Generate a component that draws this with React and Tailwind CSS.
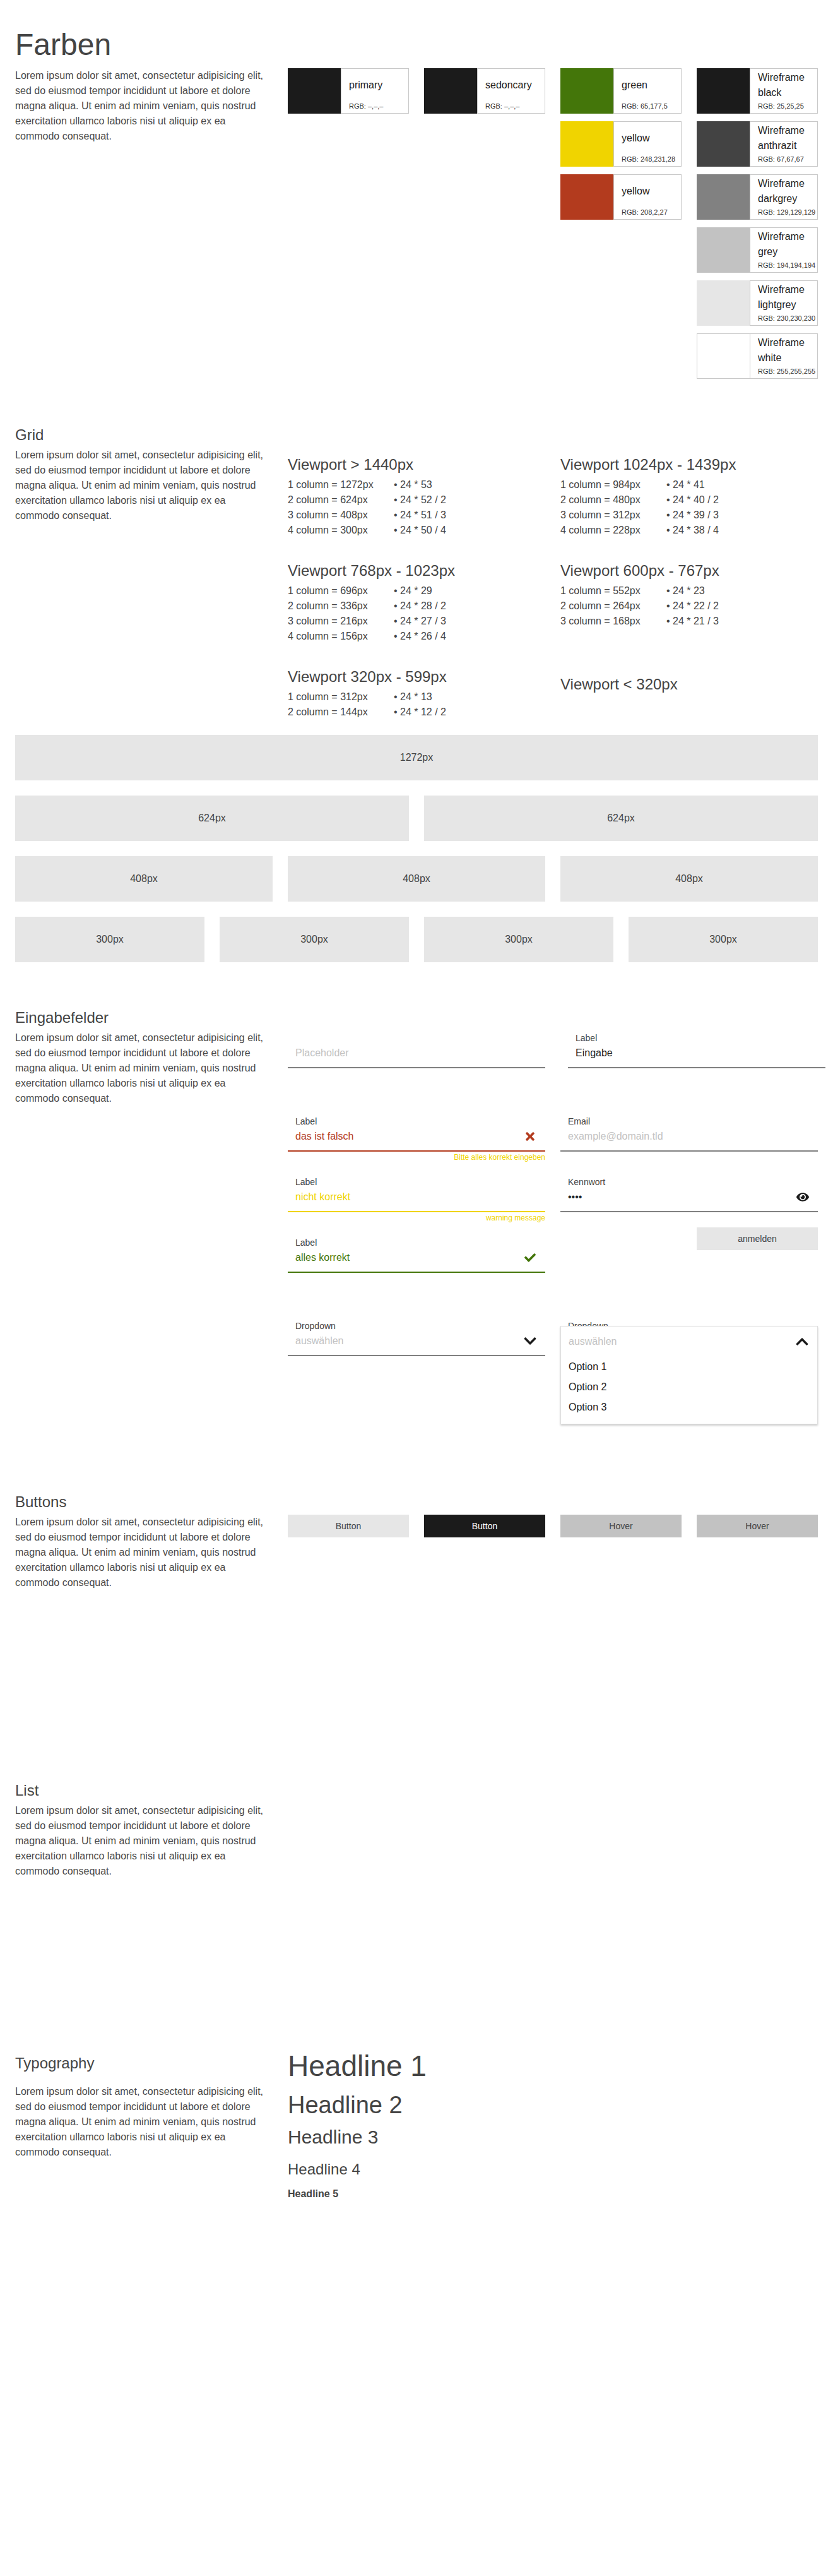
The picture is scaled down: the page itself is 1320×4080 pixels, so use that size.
import React from "react"
import { FaTimes, FaCheck, FaEye, FaChevronDown, FaChevronUp } from "react-icons/fa"

const LOREM =
  "Lorem ipsum dolor sit amet, consectetur adipisicing elit, sed do eiusmod tempor incididunt ut labore et dolore magna aliqua. Ut enim ad minim veniam, quis nostrud exercitation ullamco laboris nisi ut aliquip ex ea commodo consequat."

const Lorem = ({ className = "" }) => (
  <p className={`text-[16px] leading-6 text-[#4a4a4a] ${className}`}>{LOREM}</p>
)

const Heading = ({ children, className = "" }) => (
  <h2 className={`text-[24px] leading-8 text-[#444] ${className}`}>{children}</h2>
)

const Swatch = ({ color, name, rgb, white }) => (
  <div className="flex h-[72px]">
    <div className={`w-[84px] shrink-0 ${color} ${white ? "border border-r-0 border-[#c8c8c8]" : ""}`} />
    <div className="flex flex-1 flex-col border border-[#c8c8c8] pl-3">
      <div className="flex flex-1 items-center text-[16px] leading-6 text-[#222]">
        <span className="block">{name}</span>
      </div>
      <div className="pb-[3px] text-[11px] leading-4 text-[#333]">RGB: {rgb}</div>
    </div>
  </div>
)

const Viewport = ({ title, rows, className = "" }) => (
  <div className={className}>
    <h3 className="text-[24px] leading-8 text-[#444]">{title}</h3>
    <div className="mt-1">
      {rows.map((r) => (
        <div key={r[0]} className="flex text-[16px] leading-6 text-[#444]">
          <span className="w-[168px]">{r[0]}</span>
          <span>• {r[1]}</span>
        </div>
      ))}
    </div>
  </div>
)

const Box = ({ label }) => (
  <div className="flex h-[72px] items-center justify-center bg-[#e6e6e6] text-[16px] text-[#444]">{label}</div>
)

// underline input field: label 16 + gap 4 + value 24 + pb 10 + border 2 = 56px
const Field = ({ label, value, valueClass = "text-[#222]", line = "border-[#808080]", icon, className = "" }) => (
  <div className={`border-b-2 pb-[10px] pl-3 ${line} ${className}`}>
    <div className="h-4 text-[14px] leading-4 text-[#444]">{label}</div>
    <div className="mt-1 flex h-6 items-center">
      <span className={`flex-1 text-[16px] leading-6 ${valueClass}`}>{value}</span>
      {icon && <span className="mr-3 flex w-6 items-center justify-center">{icon}</span>}
    </div>
  </div>
)

const Button = ({ children, className }) => (
  <div className={`flex h-9 items-center justify-center text-[14px] ${className}`}>{children}</div>
)

export default function App() {
  return (
    <div className="min-h-[4080px] w-[1320px] bg-white px-6 pt-[47px] font-['Liberation_Sans',Arial,sans-serif]">
      {/* Farben */}
      <h1 className="text-[48px] leading-[48px] text-[#444]">Farben</h1>
      <div className="mt-[13px] grid grid-cols-[408px_840px] gap-x-6">
        <Lorem />
        <div className="grid grid-cols-4 items-start gap-x-6">
          <div className="flex flex-col gap-3">
            <Swatch color="bg-[#1b1b1b]" name="primary" rgb="–,–,–" />
          </div>
          <div className="flex flex-col gap-3">
            <Swatch color="bg-[#1b1b1b]" name="sedoncary" rgb="–,–,–" />
          </div>
          <div className="flex flex-col gap-3">
            <Swatch color="bg-[#44760a]" name="green" rgb="65,177,5" />
            <Swatch color="bg-[#f0d400]" name="yellow" rgb="248,231,28" />
            <Swatch color="bg-[#b33b1e]" name="yellow" rgb="208,2,27" />
          </div>
          <div className="flex flex-col gap-3">
            <Swatch color="bg-[#1b1b1b]" name={<>Wireframe<br />black</>} rgb="25,25,25" />
            <Swatch color="bg-[#434343]" name={<>Wireframe<br />anthrazit</>} rgb="67,67,67" />
            <Swatch color="bg-[#818181]" name={<>Wireframe<br />darkgrey</>} rgb="129,129,129" />
            <Swatch color="bg-[#c2c2c2]" name={<>Wireframe<br />grey</>} rgb="194,194,194" />
            <Swatch color="bg-[#e6e6e6]" name={<>Wireframe<br />lightgrey</>} rgb="230,230,230" />
            <Swatch color="bg-white" white name={<>Wireframe<br />white</>} rgb="255,255,255" />
          </div>
        </div>
      </div>

      {/* Grid */}
      <Heading className="mt-[73px]">Grid</Heading>
      <div className="mt-1 grid grid-cols-[408px_840px] gap-x-6">
        <Lorem />
        <div className="grid grid-cols-2 gap-x-6 pt-[11px]">
          <Viewport
            className="h-[168px]"
            title="Viewport > 1440px"
            rows={[
              ["1 column = 1272px", "24 * 53"],
              ["2 column = 624px", "24 * 52 / 2"],
              ["3 column = 408px", "24 * 51 / 3"],
              ["4 column = 300px", "24 * 50 / 4"],
            ]}
          />
          <Viewport
            className="h-[168px]"
            title="Viewport 1024px - 1439px"
            rows={[
              ["1 column = 984px", "24 * 41"],
              ["2 column = 480px", "24 * 40 / 2"],
              ["3 column = 312px", "24 * 39 / 3"],
              ["4 column = 228px", "24 * 38 / 4"],
            ]}
          />
          <Viewport
            className="h-[168px]"
            title="Viewport 768px - 1023px"
            rows={[
              ["1 column = 696px", "24 * 29"],
              ["2 column = 336px", "24 * 28 / 2"],
              ["3 column = 216px", "24 * 27 / 3"],
              ["4 column = 156px", "24 * 26 / 4"],
            ]}
          />
          <Viewport
            className="h-[168px]"
            title="Viewport 600px - 767px"
            rows={[
              ["1 column = 552px", "24 * 23"],
              ["2 column = 264px", "24 * 22 / 2"],
              ["3 column = 168px", "24 * 21 / 3"],
            ]}
          />
          <Viewport
            title="Viewport 320px - 599px"
            rows={[
              ["1 column = 312px", "24 * 13"],
              ["2 column = 144px", "24 * 12 / 2"],
            ]}
          />
          <Viewport className="pt-3" title="Viewport < 320px" rows={[]} />
        </div>
      </div>

      <div className="mt-6 flex flex-col gap-6">
        <Box label="1272px" />
        <div className="grid grid-cols-2 gap-6">
          <Box label="624px" />
          <Box label="624px" />
        </div>
        <div className="grid grid-cols-3 gap-6">
          <Box label="408px" />
          <Box label="408px" />
          <Box label="408px" />
        </div>
        <div className="grid grid-cols-4 gap-6">
          <Box label="300px" />
          <Box label="300px" />
          <Box label="300px" />
          <Box label="300px" />
        </div>
      </div>

      {/* Eingabefelder */}
      <Heading className="mt-[72px]">Eingabefelder</Heading>
      <div className="mt-1 grid grid-cols-[408px_840px] gap-x-6">
        <Lorem />
        <div className="grid grid-cols-2 items-start gap-x-6 pt-1">
          <div>
            <Field label="" value="Placeholder" valueClass="text-[#c2c2c2]" />
            <div className="mt-[76px]">
              <Field
                label="Label"
                value="das ist falsch"
                valueClass="text-[#b33b1e]"
                line="border-[#b33b1e]"
                icon={<FaTimes size={20} color="#b33b1e" />}
              />
              <div className="h-10 pt-px text-right text-[12px] leading-4 text-[#f0d400]">Bitte alles korrekt eingeben</div>
            </div>
            <div>
              <Field label="Label" value="nicht korrekt" valueClass="text-[#f0d400]" line="border-[#f0d400]" />
              <div className="h-10 pt-px text-right text-[12px] leading-4 text-[#f0d400]">warning message</div>
            </div>
            <Field
              label="Label"
              value="alles korrekt"
              valueClass="text-[#44760a]"
              line="border-[#44760a]"
              icon={<FaCheck size={18} color="#44760a" />}
            />
            <Field
              className="mt-[76px]"
              label="Dropdown"
              value="auswählen"
              valueClass="text-[#c2c2c2]"
              icon={<FaChevronDown size={22} color="#1b1b1b" />}
            />
          </div>

          <div>
            <Field className="-mr-3 ml-3" label="Label" value="Eingabe" />
            <Field className="mt-[76px]" label="Email" value="example@domain.tld" valueClass="text-[#c2c2c2]" />
            <Field
              className="mt-10"
              label="Kennwort"
              value="••••"
              valueClass="text-[#222] text-[13px]"
              icon={<FaEye size={20} color="#1b1b1b" />}
            />
            <Button className="ml-auto mt-6 w-[192px] bg-[#e6e6e6] text-[#444]">anmelden</Button>
            <div className="relative mt-[112px]">
              <Field label="Dropdown" value="auswählen" valueClass="text-[#c2c2c2]" />
              <div className="absolute left-0 right-0 top-2 z-10 border border-[#dedede] bg-white px-3 pb-[10px] pt-3 shadow-[0_2px_3px_rgba(0,0,0,0.2)]">
                <div className="flex h-6 items-center">
                  <span className="flex-1 text-[16px] text-[#c2c2c2]">auswählen</span>
                  <span className="flex w-6 items-center justify-center">
                    <FaChevronUp size={22} color="#1b1b1b" />
                  </span>
                </div>
                <div className="mt-3">
                  {["Option 1", "Option 2", "Option 3"].map((o) => (
                    <div key={o} className="flex h-8 items-center text-[16px] text-[#222]">
                      {o}
                    </div>
                  ))}
                </div>
              </div>
            </div>
          </div>
        </div>
      </div>

      {/* Buttons */}
      <Heading className="mt-[215px]">Buttons</Heading>
      <div className="mt-1 grid grid-cols-[408px_840px] gap-x-6">
        <Lorem />
        <div className="grid grid-cols-4 items-start gap-x-6">
          <Button className="bg-[#e6e6e6] text-[#444]">Button</Button>
          <Button className="bg-[#1b1b1b] text-white">Button</Button>
          <Button className="bg-[#c2c2c2] text-[#444]">Hover</Button>
          <Button className="bg-[#c2c2c2] text-[#444]">Hover</Button>
        </div>
      </div>

      {/* List */}
      <Heading className="mt-[301px]">List</Heading>
      <div className="mt-1 grid grid-cols-[408px_840px] gap-x-6">
        <Lorem />
        <div />
      </div>

      {/* Typography */}
      <div className="mt-[268px] grid grid-cols-[408px_840px] gap-x-6">
        <div>
          <Heading className="mt-2">Typography</Heading>
          <Lorem className="mt-[17px]" />
        </div>
        <div className="text-[#444]">
          <h1 className="text-[46px] leading-[56px]">Headline 1</h1>
          <h2 className="mt-[11px] text-[38px] leading-[46px]">Headline 2</h2>
          <h3 className="mt-[10px] text-[30px] leading-[36px]">Headline 3</h3>
          <h4 className="mt-[18px] text-[24px] leading-[30px]">Headline 4</h4>
          <h5 className="mt-[14px] text-[16px] font-bold leading-5">Headline 5</h5>
        </div>
      </div>
    </div>
  )
}
